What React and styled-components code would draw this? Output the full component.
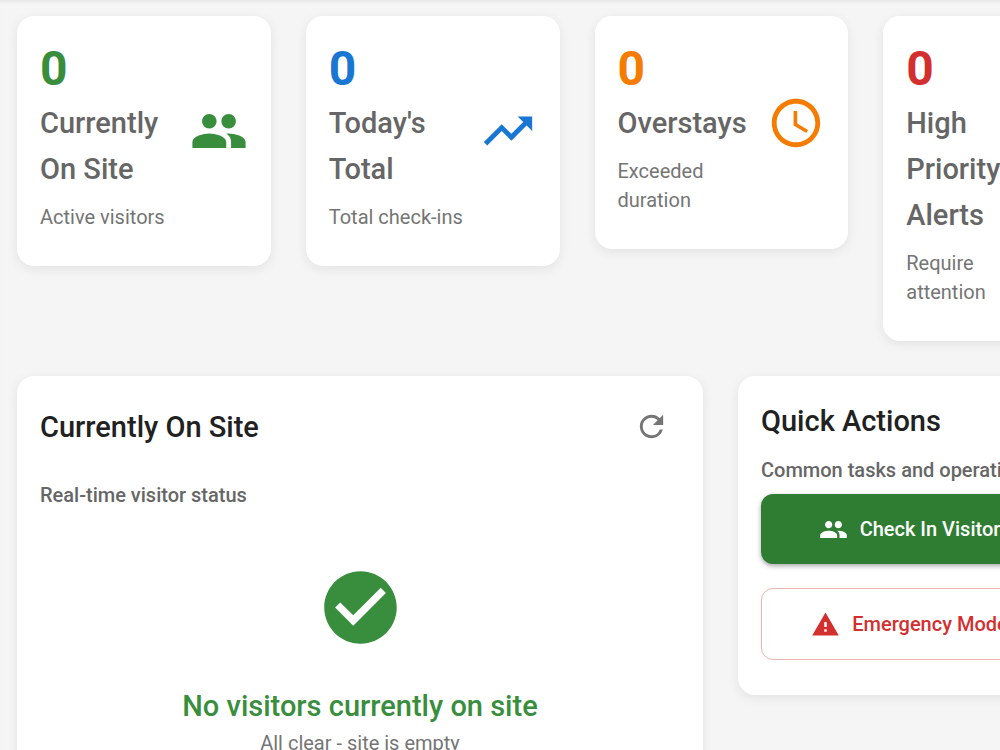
import { useState } from 'react';
import styled, { createGlobalStyle } from 'styled-components';
import { MdPeople, MdTrendingUp, MdAccessTime, MdRefresh, MdCheckCircle, MdWarning } from 'react-icons/md';

const stats = [
  { title: 'Currently On Site', note: 'Active visitors', color: '#388e3c', icon: MdPeople },
  { title: "Today's Total", note: 'Total check-ins', color: '#1976d2', icon: MdTrendingUp },
  { title: 'Overstays', note: 'Exceeded duration', color: '#f57c00', icon: MdAccessTime },
  { title: 'High Priority Alerts', note: 'Require attention', color: '#d32f2f', icon: MdWarning },
];

const App = () => {
  const [visitors, setVisitors] = useState(0);

  return (
    <Page>
      <GlobalStyle />
      <Stats>
        {stats.map(({ title, note, color, icon: Icon }) => (
          <StatCard key={title}>
            <StatText>
              <StatValue $color={color}>{visitors}</StatValue>
              <StatTitle>{title}</StatTitle>
              <StatNote>{note}</StatNote>
            </StatText>
            <StatIcon $color={color}>
              <Icon />
            </StatIcon>
          </StatCard>
        ))}
      </Stats>

      <Panels>
        <Card>
          <PanelHeader>
            <PanelTitle>Currently On Site</PanelTitle>
            <IconButton type="button" aria-label="Refresh" onClick={() => setVisitors(0)}>
              <MdRefresh />
            </IconButton>
          </PanelHeader>
          <PanelSubtitle>Real-time visitor status</PanelSubtitle>
          <EmptyState>
            <MdCheckCircle />
            <EmptyTitle>No visitors currently on site</EmptyTitle>
            <EmptyText>All clear - site is empty</EmptyText>
          </EmptyState>
        </Card>

        <Card>
          <PanelTitle>Quick Actions</PanelTitle>
          <ActionsText>Common tasks and operations</ActionsText>
          <Actions>
            <ActionButton type="button">
              <MdPeople />
              Check In Visitor
            </ActionButton>
            <EmergencyButton type="button">
              <MdWarning />
              Emergency Mode
            </EmergencyButton>
          </Actions>
        </Card>
      </Panels>
    </Page>
  );
};

export default App;

// Styled Components
const GlobalStyle = createGlobalStyle`
  * {
    box-sizing: border-box;
  }

  body {
    margin: 0;
    background-color: #f5f5f5;
    font-family: Roboto, 'Liberation Sans', sans-serif;
    color: #212121;
  }
`;

const Page = styled.main`
  min-width: 1154px;
  padding: 16px 17px;
  box-shadow: inset 0 4px 4px -3px rgba(0, 0, 0, 0.08);
`;

const Stats = styled.section`
  display: grid;
  grid-template-columns: repeat(4, minmax(0, 1fr));
  align-items: start;
  gap: 35px;
`;

const Card = styled.section`
  padding: 22px 23px;
  background-color: #fff;
  border-radius: 17px;
  box-shadow: 0 3px 12px rgba(0, 0, 0, 0.08);
`;

const StatCard = styled(Card)`
  display: flex;
  align-items: center;
  justify-content: space-between;
  padding: 24px 23px 34px;
`;

const StatText = styled.div`
  flex: 1;
`;

const StatValue = styled.div`
  font-size: 48px;
  font-weight: 700;
  line-height: 58px;
  color: ${({ $color }) => $color};
`;

const StatTitle = styled.h2`
  margin: 2px 0 11px;
  font-size: 29px;
  font-weight: 500;
  line-height: 46px;
  color: #666;
`;

const StatNote = styled.p`
  margin: 0;
  font-size: 20px;
  line-height: 29px;
  color: #757575;
`;

const StatIcon = styled.div`
  display: flex;
  margin-left: 8px;
  padding-bottom: 10px;
  font-size: 58px;
  color: ${({ $color }) => $color};
`;

const Panels = styled.div`
  display: grid;
  grid-template-columns: minmax(0, 2fr) minmax(0, 1fr);
  align-items: start;
  gap: 35px;
  width: 95%;
  margin-top: 35px;
`;

const PanelHeader = styled.div`
  display: flex;
  align-items: center;
  justify-content: space-between;
`;

const PanelTitle = styled.h2`
  margin: 0;
  font-size: 29px;
  font-weight: 500;
  line-height: 46px;
`;

const IconButton = styled.button`
  display: flex;
  padding: 11px;
  border: none;
  border-radius: 50%;
  background: none;
  font-size: 35px;
  color: #757575;
  cursor: pointer;
`;

const PanelSubtitle = styled.p`
  margin: 24px 0 0;
  font-size: 20px;
  font-weight: 500;
  line-height: 32px;
  color: #666;
`;

const EmptyState = styled.div`
  display: flex;
  flex-direction: column;
  align-items: center;
  padding: 53px 0 46px;

  svg {
    font-size: 87px;
    color: #388e3c;
  }
`;

const EmptyTitle = styled.h3`
  margin: 32px 0 0;
  font-size: 29px;
  font-weight: 500;
  line-height: 46px;
  color: #388e3c;
`;

const EmptyText = styled.p`
  margin: 0;
  font-size: 20px;
  line-height: 29px;
  color: #757575;
`;

const ActionsText = styled(PanelSubtitle)`
  margin: 10px 0 8px;
  white-space: nowrap;
`;

const Actions = styled.div`
  display: flex;
  flex-direction: column;
  gap: 24px;
  padding-bottom: 13px;
`;

const ActionButton = styled.button`
  display: flex;
  align-items: center;
  justify-content: center;
  gap: 12px;
  height: 70px;
  border: none;
  border-radius: 12px;
  background-color: #2e7d32;
  box-shadow: 0 2px 5px rgba(0, 0, 0, 0.35);
  font-family: inherit;
  font-size: 20px;
  font-weight: 500;
  color: #fff;
  cursor: pointer;

  svg {
    font-size: 29px;
  }
`;

const EmergencyButton = styled(ActionButton)`
  height: 72px;
  border: 1px solid #f0b4b4;
  background-color: #fff;
  box-shadow: none;
  color: #d32f2f;
`;
